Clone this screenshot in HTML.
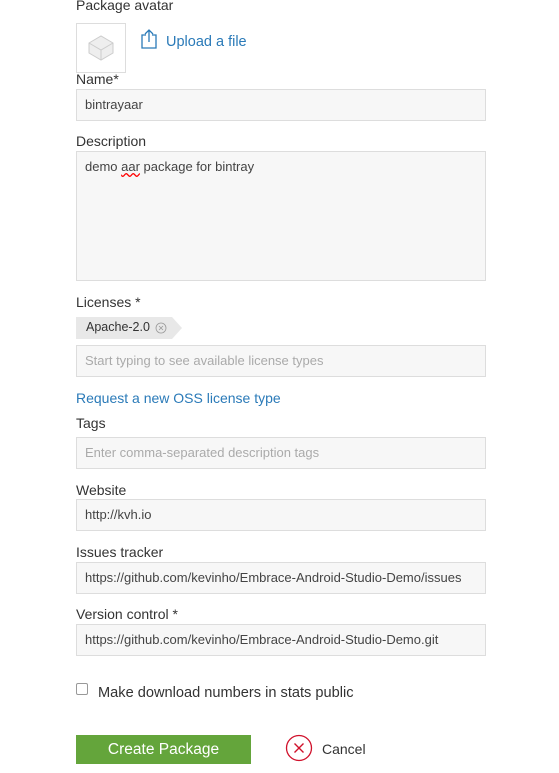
<!DOCTYPE html>
<html><head><style>
body{margin:0;width:559px;height:773px;background:#fff;font-family:"Liberation Sans",sans-serif;color:#333;position:relative;overflow:hidden}
.a{position:absolute}
.l{position:absolute;left:76px;font-size:14px;color:#333}
.i{position:absolute;left:76px;width:400px;height:30px;border:1px solid #ddd;background:#f7f7f7;font-size:13px;line-height:30px;padding-left:8px;box-sizing:content-box;color:#444;white-space:nowrap;overflow:hidden}
.i.p{color:#aaa}
</style></head><body>
<div class="l" style="top:-3px">Package avatar</div>
<div class="a" style="left:76px;top:23px;width:48px;height:48px;border:1px solid #ddd;background:#fff">
<svg width="48" height="48" viewBox="0 0 48 48"><path d="M12 19 L24 12 L36 19 L36 29 L24 36 L12 29 Z" fill="#eee" stroke="#ccc"/><path d="M12 19 L24 26 L36 19 M24 26 V36" fill="none" stroke="#ccc"/></svg></div>
<svg class="a" style="left:140px;top:28px" width="18" height="22" viewBox="0 0 18 22"><path d="M6 7 H2 V20 H16 V7 H12" fill="none" stroke="#2a7ab8" stroke-width="1.3"/><path d="M9 14 V2 M5 6 L9 2 L13 6" fill="none" stroke="#2a7ab8" stroke-width="1.3"/></svg>
<div class="a" style="left:166px;top:34px;font-size:14.5px;color:#2a7ab8">Upload a file</div>
<div class="l" style="top:71px">Name*</div>
<div class="i" style="top:89px">bintrayaar</div>
<div class="l" style="top:133px">Description</div>
<div class="i" style="top:151px;line-height:18px;padding-top:6px;height:122px">demo <span style="text-decoration:underline wavy red">aar</span> package for bintray</div>
<div class="l" style="top:294px">Licenses *</div>
<svg class="a" style="left:76px;top:317px" width="108" height="22"><path d="M0 0 H96 L106 11 L96 22 H0 Z" fill="#e8e8e8"/><circle cx="85" cy="11" r="5" fill="none" stroke="#999" stroke-width=".8"/><path d="M83 9 L87 13 M87 9 L83 13" stroke="#999" stroke-width=".8"/></svg>
<div class="a" style="left:86px;top:320px;font-size:12.5px;color:#333">Apache-2.0</div>
<div class="i p" style="top:345px">Start typing to see available license types</div>
<div class="a" style="left:76px;top:390px;font-size:14px;color:#2a7ab8">Request a new OSS license type</div>
<div class="l" style="top:415px">Tags</div>
<div class="i p" style="top:437px">Enter comma-separated description tags</div>
<div class="l" style="top:482px">Website</div>
<div class="i" style="top:499px">http://kvh.io</div>
<div class="l" style="top:544px">Issues tracker</div>
<div class="i" style="top:562px">https://github.com/kevinho/Embrace-Android-Studio-Demo/issues</div>
<div class="l" style="top:606px">Version control *</div>
<div class="i" style="top:624px">https://github.com/kevinho/Embrace-Android-Studio-Demo.git</div>
<div class="a" style="left:76px;top:683px;width:10px;height:10px;border:1px solid #999;border-radius:2px"></div>
<div class="a" style="left:98px;top:685px;font-size:14.6px">Make download numbers in stats public</div>
<div class="a" style="left:76px;top:735px;width:175px;height:29px;background:#64a53b;color:#fff;font-size:15.5px;text-align:center;line-height:29px">Create Package</div>
<svg class="a" style="left:285px;top:734px" width="28" height="28"><circle cx="14" cy="14" r="12.5" fill="none" stroke="#d0112b" stroke-width="1.3"/><path d="M9.5 9.5 L18.5 18.5 M18.5 9.5 L9.5 18.5" stroke="#d0112b" stroke-width="1.4"/></svg>
<div class="a" style="left:322px;top:741px;font-size:14px;color:#333">Cancel</div>
</body></html>
